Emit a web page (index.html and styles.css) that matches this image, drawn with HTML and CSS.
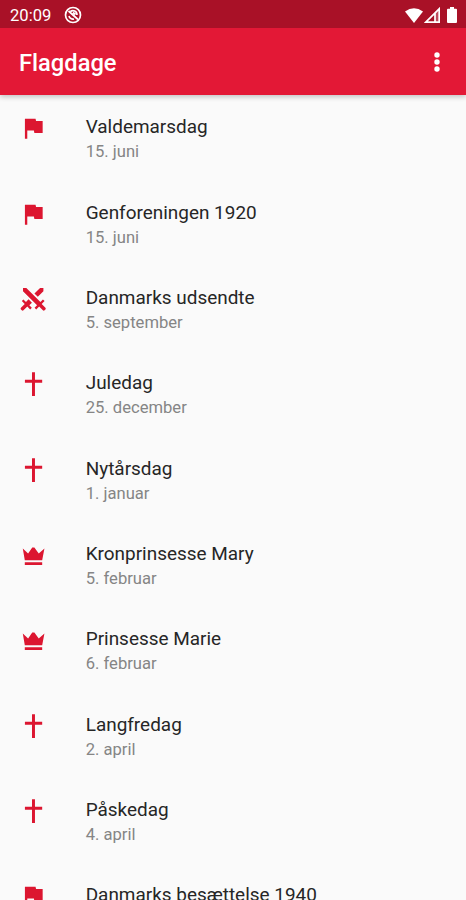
FILE: index.html
```html
<!DOCTYPE html>
<html lang="da">
<head>
<meta charset="utf-8">
<title>Flagdage</title>
<link rel="stylesheet" href="styles.css">
</head>
<body>
<svg class="defs" aria-hidden="true">
  <symbol id="flag" viewBox="0 0 24 24"><path d="M14.4 6 14 4H5v17h2v-7h5.6l.4 2h7V6z"/></symbol>
  <symbol id="swords" viewBox="0 0 24 24"><path d="M6.2 2.44 18.1 14.34 20.22 12.22 21.63 13.63 19.16 16.1 22.34 19.28C22.73 19.67 22.73 20.3 22.34 20.69L21.63 21.4C21.24 21.79 20.61 21.79 20.22 21.4L17 18.23 14.56 20.7 13.15 19.29 15.27 17.17 3.37 5.27V2.44H6.2M15.89 10 20.63 5.26V2.44H17.8L13.06 7.18 15.89 10M10.94 15 8.11 12.13 5.9 14.34 3.78 12.22 2.37 13.63 4.84 16.1 1.66 19.29C1.27 19.68 1.27 20.31 1.66 20.7L2.37 21.41C2.76 21.8 3.39 21.8 3.78 21.41L7 18.23 9.44 20.7 10.85 19.29 8.73 17.17 10.94 15Z"/></symbol>
  <symbol id="cross" viewBox="0 0 24 24"><path d="M11 2h2.500v6.300h6.100v2.400h-6.100V22H11V10.700H5V8.300h6z"/></symbol>
  <symbol id="crown" viewBox="0 0 24 24"><path d="M4.900 16.300 3.200 6.300l4.500 4.200L11.200 5.500h1.800l3.700 5L21.500 6.300l-1.900 10zM4.900 17.900h14.700v2.400H4.900z"/></symbol>
</svg>
<header>
  <div class="status">
    <span class="clock">20:09</span>
    <svg class="notice" viewBox="0 0 18 18"><circle cx="9" cy="9" r="7.500"/><path d="m4.500 5 9.500 8.500M5 10a4 4 0 0 0 5 3M6.500 5.500C9 3.500 13 5 13 9M9 6.500l2.500 2"/></svg>
    <span class="spacer"></span>
    <svg class="wifi" viewBox="0 0 18 15"><path d="M0 3.500Q9-3 18 3.500L9 15z"/></svg>
    <svg class="signal" viewBox="0 0 16 16"><path class="faint" d="M11 5.500 15 1.500V15h-4z"/><path class="edge" d="M1.800 15.200 15.200 1.800v13.400zM11 6v9"/></svg>
    <svg class="battery" viewBox="0 0 10 16"><path d="M3 0h4v1.700h2q1 0 1 1V15q0 1-1 1H1q-1 0-1-1V2.700q0-1 1-1h2z"/></svg>
  </div>
  <div class="appbar">
    <h1>Flagdage</h1>
    <svg class="more" viewBox="0 0 6 22"><circle cx="3" cy="4" r="2.700"/><circle cx="3" cy="11" r="2.700"/><circle cx="3" cy="18" r="2.700"/></svg>
  </div>
</header>
<ul>
  <li><svg><use href="#flag"/></svg><div><h2>Valdemarsdag</h2><p>15. juni</p></div></li>
  <li><svg><use href="#flag"/></svg><div><h2>Genforeningen 1920</h2><p>15. juni</p></div></li>
  <li><svg><use href="#swords"/></svg><div><h2>Danmarks udsendte</h2><p>5. september</p></div></li>
  <li><svg><use href="#cross"/></svg><div><h2>Juledag</h2><p>25. december</p></div></li>
  <li><svg><use href="#cross"/></svg><div><h2>Nytårsdag</h2><p>1. januar</p></div></li>
  <li><svg><use href="#crown"/></svg><div><h2>Kronprinsesse Mary</h2><p>5. februar</p></div></li>
  <li><svg><use href="#crown"/></svg><div><h2>Prinsesse Marie</h2><p>6. februar</p></div></li>
  <li><svg><use href="#cross"/></svg><div><h2>Langfredag</h2><p>2. april</p></div></li>
  <li><svg><use href="#cross"/></svg><div><h2>Påskedag</h2><p>4. april</p></div></li>
  <li><svg><use href="#flag"/></svg><div><h2>Danmarks besættelse 1940</h2></div></li>
</ul>
</body>
</html>
```
FILE: styles.css
```css
* { box-sizing: border-box; margin: 0; padding: 0; }
body {
  height: 900px;
  display: flex;
  flex-direction: column;
  overflow: hidden;
  background: #fafafa;
  color: #262626;
  font-family: Roboto, sans-serif;
}
.defs { position: absolute; width: 0; height: 0; }
header {
  flex: none;
  z-index: 1;
  background: #e31836;
  color: #fff;
  box-shadow: 0 2px 5px rgba(0, 0, 0, .22);
}
.status {
  height: 28.400px;
  display: flex;
  align-items: center;
  padding: 2px 9px 0 10px;
  background: #a91127;
}
.clock { font-size: 16.600px; line-height: 20px; padding-top: 1px; }
.notice { width: 18px; height: 18px; margin-left: 13px; fill: none; stroke: #fff; stroke-width: 1.700; }
.spacer { flex: 1; }
.wifi { width: 18px; height: 15px; fill: #fff; }
.signal { width: 16px; height: 16px; margin-left: 1px; }
.faint { fill: #fff; opacity: .25; }
.edge { fill: none; stroke: #fff; stroke-width: 1.700; }
.battery { width: 10px; height: 16px; margin-left: 7px; fill: #fff; }
.appbar {
  height: 66.400px;
  display: flex;
  align-items: center;
  justify-content: space-between;
  padding: 0 26px 0 19px;
}
h1 { font-size: 23.700px; line-height: 28px; font-weight: 500; padding-top: 2px; }
.more { width: 6px; height: 22px; fill: #fff; }
ul { flex: 1; min-height: 0; overflow: hidden; list-style: none; }
li {
  height: 85.330px;
  display: flex;
  padding: 19.500px 19px 0;
}
li svg { flex: none; width: 28.400px; height: 28.400px; margin-right: 38.300px; fill: #dc1630; }
h2 { font-size: 18.960px; line-height: 24px; font-weight: 400; margin-top: 1px; white-space: nowrap; }
p { font-size: 16.600px; line-height: 24px; padding-top: 1px; color: #858585; }
```
